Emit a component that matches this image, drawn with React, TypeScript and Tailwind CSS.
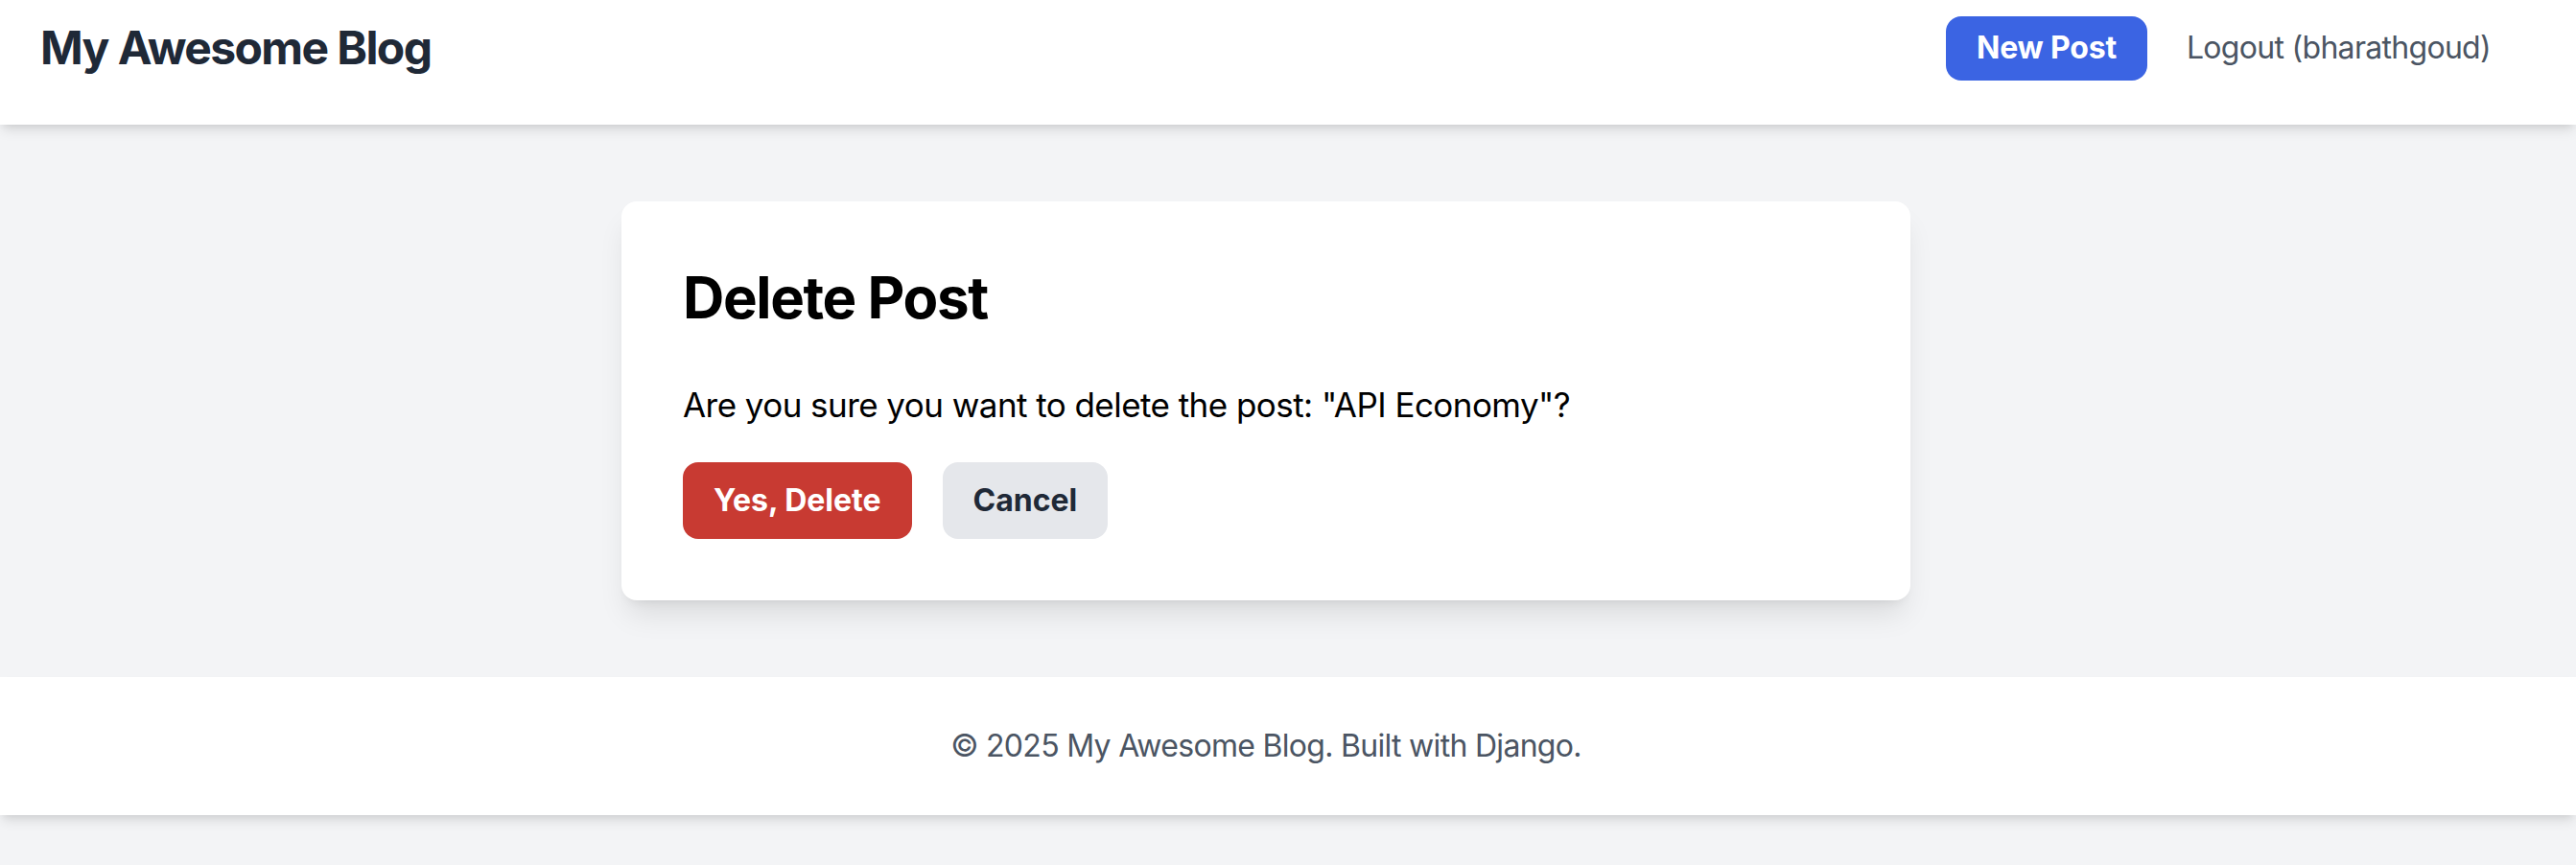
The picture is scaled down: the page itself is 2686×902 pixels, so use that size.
export default function App() {
  return (
    <div
      className="min-h-screen bg-[#f3f4f6] text-black"
      style={{ fontFamily: 'Inter, "Noto Sans", "Liberation Sans", sans-serif' }}
    >
      <header className="h-[130px] bg-white shadow-[0_8px_12px_-2px_rgba(0,0,0,0.1),0_4px_8px_-4px_rgba(0,0,0,0.1)] relative z-10">
        <div className="flex h-[100px] items-center justify-between pl-[42px] pr-[89px]">
          <h1 className="text-[48px] font-bold leading-[64px] tracking-[-1.6px] text-[#1f2937]">My Awesome Blog</h1>
          <nav className="flex items-center gap-[41px]">
            <a className="flex h-[67px] items-center rounded-[16px] bg-[#3b64e3] px-[32px] text-[32px] font-bold leading-[48px] tracking-[-0.2px] text-white">
              New Post
            </a>
            <a className="text-[32px] leading-[48px] tracking-[-0.7px] text-[#4b5563]">Logout (bharathgoud)</a>
          </nav>
        </div>
      </header>

      <main className="py-[80px] pr-[46px]">
        <div className="mx-auto w-[1344px] rounded-[16px] bg-white p-[64px] shadow-[0_20px_30px_-6px_rgba(0,0,0,0.1),0_8px_12px_-8px_rgba(0,0,0,0.1)]">
          <h2 className="mb-[48px] text-[60px] font-bold leading-[72px] tracking-[-1.4px]">Delete Post</h2>
          <p className="mb-[32px] text-[35px] leading-[56px] tracking-[-0.55px]">
            Are you sure you want to delete the post: "API Economy"?
          </p>
          <div className="flex gap-[32px]">
            <button className="h-[80px] rounded-[16px] bg-[#c83a32] px-[32px] text-[32px] font-bold leading-[48px] text-white">
              Yes, Delete
            </button>
            <button className="h-[80px] rounded-[16px] bg-[#e5e7eb] px-[32px] text-[32px] font-bold leading-[48px] text-[#1f2937]">
              Cancel
            </button>
          </div>
        </div>
      </main>

      <footer className="bg-white py-[48px] pr-[46px] text-center shadow-[0_8px_12px_-2px_rgba(0,0,0,0.1),0_4px_8px_-4px_rgba(0,0,0,0.1)]">
        <p className="text-[32px] leading-[48px] tracking-[-0.7px] text-[#4b5563]">© 2025 My Awesome Blog. Built with Django.</p>
      </footer>
    </div>
  );
}
